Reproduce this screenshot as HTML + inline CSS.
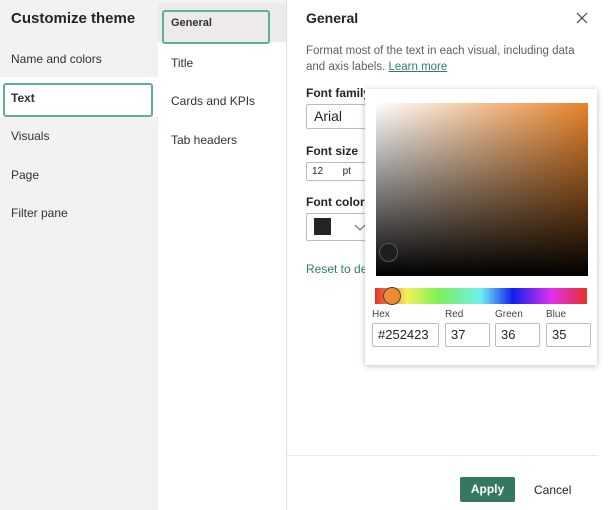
<!DOCTYPE html>
<html><head><style>
*{box-sizing:border-box;margin:0;padding:0}
body{width:608px;height:510px;position:relative;overflow:hidden;background:#fff;font-family:"Liberation Sans",sans-serif;color:#252423}
.a{position:absolute}
.nav{font-size:12px;color:#323130}
.lbl{font-size:12px;font-weight:bold;color:#252423}
.inp{position:absolute;border:1px solid #bdbdbd;border-radius:2px;font-size:14px;padding-left:5px;line-height:22px;background:#fff}
.pl{font-size:10px;color:#444}
</style></head><body>
<div class="a" style="left:0;top:0;width:158px;height:510px;background:#f3f2f1"></div>
<div class="a" style="left:158px;top:0;width:128px;height:510px;background:#fff"></div>
<div class="a" style="left:158px;top:0;width:128px;height:3px;background:#f3f2f1"></div>
<div class="a" style="left:158px;top:3px;width:128px;height:39px;background:#edebe9"></div>
<div class="a" style="left:286px;top:0;width:1px;height:510px;background:#e1dfdd"></div>
<div class="a" style="left:11px;top:10px;font-size:15px;font-weight:bold;color:#252423">Customize theme</div>
<div class="a nav" style="left:11px;top:52px">Name and colors</div>
<div class="a" style="left:0;top:77px;width:158px;height:40px;background:#fff"></div>
<div class="a" style="left:3px;top:83px;width:150px;height:34px;border:2px solid #5fae9a;border-radius:3px;background:#fff"></div>
<div class="a nav" style="left:11px;top:91px;font-weight:bold">Text</div>
<div class="a nav" style="left:11px;top:129px">Visuals</div>
<div class="a nav" style="left:11px;top:168px">Page</div>
<div class="a nav" style="left:11px;top:206px">Filter pane</div>
<div class="a" style="left:162px;top:10px;width:108px;height:34px;border:2px solid #5fae9a;border-radius:3px;background:#edebe9"></div>
<div class="a nav" style="left:171px;top:17px;font-weight:bold;font-size:11px">General</div>
<div class="a nav" style="left:171px;top:56px">Title</div>
<div class="a nav" style="left:171px;top:94px">Cards and KPIs</div>
<div class="a nav" style="left:171px;top:133px">Tab headers</div>

<div class="a" style="left:306px;top:10px;font-size:14px;font-weight:bold">General</div>
<svg class="a" style="left:576px;top:12px" width="12" height="12"><path d="M1 1L11 11M11 1L1 11" stroke="#444" stroke-width="1.2"/></svg>
<div class="a" style="left:306px;top:43px;width:290px;font-size:11.5px;line-height:16px;color:#605e5c">Format most of the text in each visual, including data and axis labels. <span style="color:#2e7d6a;text-decoration:underline">Learn more</span></div>
<div class="a lbl" style="left:306px;top:86px">Font family</div>
<div class="inp" style="left:306px;top:104px;width:70px;height:25px;padding-left:7px">Arial</div>
<div class="a lbl" style="left:306px;top:144px">Font size</div>
<div class="inp" style="left:306px;top:162px;width:60px;height:19px;font-size:10px;line-height:17px">12&nbsp;&nbsp;&nbsp;&nbsp;&nbsp;&nbsp;&nbsp;pt</div>
<div class="a lbl" style="left:306px;top:195px">Font color</div>
<div class="inp" style="left:306px;top:213px;width:70px;height:28px"><div class="a" style="left:7px;top:4px;width:17px;height:17px;background:#252423"></div></div>
<svg class="a" style="left:354px;top:224px" width="12" height="8"><path d="M1 1L6 6L11 1" stroke="#666" fill="none"/></svg>
<div class="a" style="left:306px;top:262px;font-size:12px;color:#2e7d6a">Reset to def</div>

<div class="a" style="left:287px;top:455px;width:311px;height:1px;background:#e8e8e8"></div>
<div class="a" style="left:460px;top:477px;width:55px;height:25px;background:#33785f;border-radius:2px;color:#fff;font-size:12px;font-weight:bold;text-align:center;line-height:25px">Apply</div>
<div class="a" style="left:534px;top:483px;font-size:12px;color:#252423">Cancel</div>

<div class="a" style="left:365px;top:89px;width:232px;height:276px;background:#fff;box-shadow:0 1px 6px rgba(0,0,0,.25)"></div>
<div class="a" style="left:376px;top:103px;width:212px;height:173px;background:linear-gradient(to top,#000,rgba(0,0,0,0)),linear-gradient(to right,#fff,#e8832a)"></div>
<div class="a" style="left:379px;top:243px;width:19px;height:19px;border-radius:50%;border:1px solid #555;background:#1e1e1e"></div>
<div class="a" style="left:375px;top:288px;width:212px;height:16px;background:linear-gradient(to right,#e8302a,#f5f05a 15%,#7ef05a 30%,#6ef0f0 50%,#1020f0 65%,#e030f0 83%,#e8302a)"></div>
<div class="a" style="left:383px;top:287px;width:18px;height:18px;border-radius:50%;border:1.5px solid #444;background:#ef8a33"></div>
<div class="a pl" style="left:372px;top:309px">Hex</div>
<div class="a pl" style="left:445px;top:309px">Red</div>
<div class="a pl" style="left:495px;top:309px">Green</div>
<div class="a pl" style="left:546px;top:309px">Blue</div>
<div class="inp" style="left:372px;top:323px;width:67px;height:24px;font-size:13px">#252423</div>
<div class="inp" style="left:445px;top:323px;width:45px;height:24px;font-size:13px">37</div>
<div class="inp" style="left:495px;top:323px;width:45px;height:24px;font-size:13px">36</div>
<div class="inp" style="left:546px;top:323px;width:45px;height:24px;font-size:13px">35</div>
</body></html>
